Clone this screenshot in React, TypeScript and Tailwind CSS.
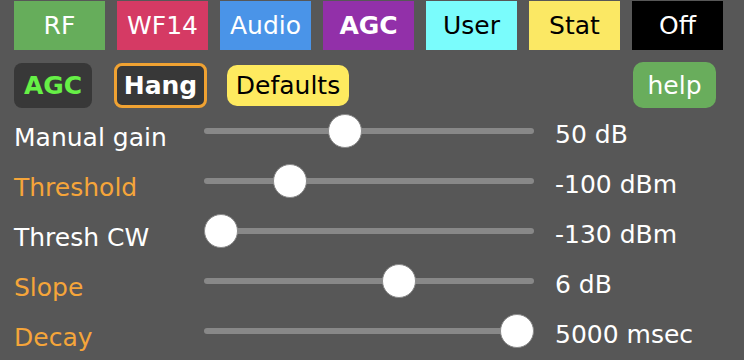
const tabs = [
  { label: 'RF', cls: 'bg-[#66ad5b] text-white' },
  { label: 'WF14', cls: 'bg-[#d53a64] text-white' },
  { label: 'Audio', cls: 'bg-[#4a94e8] text-white' },
  { label: 'AGC', cls: 'bg-[#9230a9] text-white font-bold' },
  { label: 'User', cls: 'bg-[#7afcfc] text-black' },
  { label: 'Stat', cls: 'bg-[#fbe864] text-black' },
  { label: 'Off', cls: 'bg-black text-white' },
]

const sliders = [
  { label: 'Manual gain', orange: false, pos: 0.42, value: '50 dB' },
  { label: 'Threshold', orange: true, pos: 0.233, value: '-100 dBm' },
  { label: 'Thresh CW', orange: false, pos: 0, value: '-130 dBm' },
  { label: 'Slope', orange: true, pos: 0.6, value: '6 dB' },
  { label: 'Decay', orange: true, pos: 1, value: '5000 msec' },
]

function Slider({ pos }: { pos: number }) {
  return (
    <div className="relative w-[330px] h-[34px] flex items-center">
      <div className="w-full h-[6px] rounded-full bg-[#888888]" />
      <div
        className="absolute top-0 w-[34px] h-[34px] rounded-full bg-white border-[1.5px] border-[#8a8a8a]"
        style={{ left: `${pos * 296}px` }}
      />
    </div>
  )
}

export default function App() {
  return (
    <div className="w-[744px] h-[360px] overflow-hidden bg-[#575757] font-['DejaVu_Sans',Verdana,sans-serif] text-[25px] leading-none">
      <div className="flex gap-[12px] pl-[14px] pt-[1px]">
        {tabs.map((t) => (
          <div key={t.label} className={`w-[91px] h-[49px] flex items-center justify-center ${t.cls}`}>
            {t.label}
          </div>
        ))}
      </div>

      <div className="flex items-center h-[46px] mt-[12px] pl-[14px] pr-[28px]">
        <div className="w-[78px] h-[45px] rounded-[8px] bg-[#383838] text-[#66f046] font-bold flex items-center justify-center">
          AGC
        </div>
        <div className="ml-[22px] w-[93px] h-[45px] rounded-[8px] bg-[#383838] border-[3px] border-[#f0a232] text-white font-bold flex items-center justify-center">
          Hang
        </div>
        <div className="ml-[20px] w-[122px] h-[41px] rounded-[10px] bg-[#feea5f] text-black flex items-center justify-center">
          Defaults
        </div>
        <div className="ml-auto w-[83px] h-[46px] rounded-[10px] bg-[#69ad5c] text-white flex items-center justify-center">
          help
        </div>
      </div>

      <div className="mt-[-2px]">
        {sliders.map((s) => (
          <div key={s.label} className="flex items-center h-[50px]">
            <div className={`w-[204px] pl-[14px] mt-[12px] ${s.orange ? 'text-[#f5a53a]' : 'text-white'}`}>
              {s.label}
            </div>
            <Slider pos={s.pos} />
            <div className="ml-[21px] mt-[6px] text-white">{s.value}</div>
          </div>
        ))}
      </div>
    </div>
  )
}
